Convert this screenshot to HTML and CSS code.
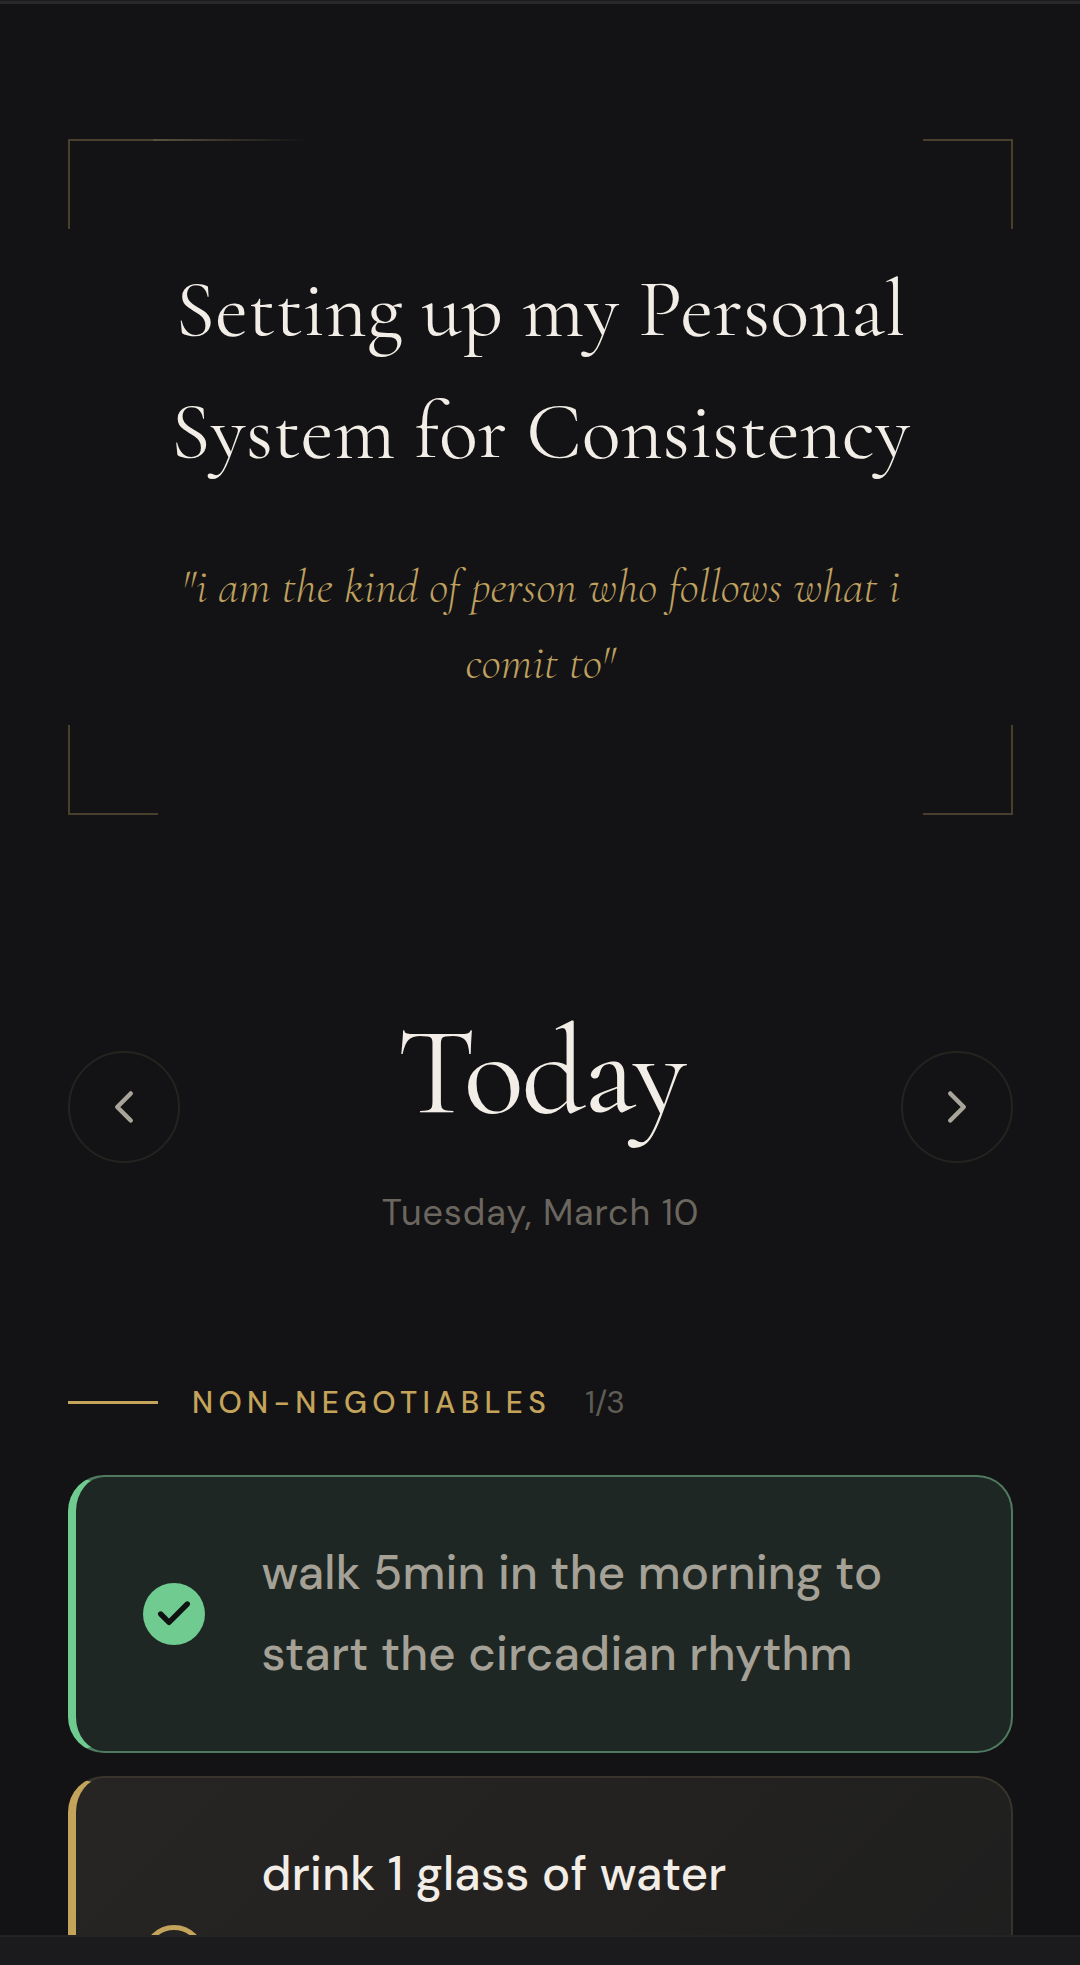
FILE: index.html
```html
<!DOCTYPE html>
<html lang="en">
<head>
<meta charset="utf-8">
<title>Personal System</title>
<link rel="stylesheet" href="styles.css">
</head>
<body>
<div class="app">
  <div class="top-bar"></div>
  <main class="content">
    <section class="hero">
      <span class="corner corner-tl"></span>
      <span class="corner corner-tr"></span>
      <span class="corner corner-bl"></span>
      <span class="corner corner-br"></span>
      <span class="shimmer"></span>
      <h1 class="hero-title">Setting up my Personal<br>System for Consistency</h1>
      <p class="hero-quote">"i am the kind of person who follows what i<br>comit to"</p>
    </section>
    <section class="day">
      <button class="nav-btn" aria-label="Previous day">
        <svg class="nav-icon" viewBox="0 0 24 24"><path d="m15 18-6-6 6-6"/></svg>
      </button>
      <div class="day-head">
        <h2 class="day-title">Today</h2>
        <p class="day-date">Tuesday, March 10</p>
      </div>
      <button class="nav-btn" aria-label="Next day">
        <svg class="nav-icon" viewBox="0 0 24 24"><path d="m9 18 6-6-6-6"/></svg>
      </button>
    </section>
    <section class="tasks">
      <header class="section-head">
        <span class="section-rule"></span>
        <span class="section-name">NON-NEGOTIABLES</span>
        <span class="section-count">1/3</span>
      </header>
      <article class="task task-done">
        <span class="check check-on">
          <svg class="check-icon" viewBox="0 0 24 24"><path d="M20 6 9 17l-5-5"/></svg>
        </span>
        <p class="task-text">walk 5min in the morning to<br>start the circadian rhythm</p>
      </article>
      <article class="task task-open">
        <span class="check check-off"></span>
        <p class="task-text">drink 1 glass of water</p>
      </article>
    </section>
  </main>
  <div class="bottom-bar"></div>
</div>
</body>
</html>
```
FILE: styles.css
```css
* { box-sizing: border-box; margin: 0; padding: 0; }
html, body { width: 1080px; height: 1965px; overflow: hidden; background: #131315; }
body { font-family: "DM Sans", "Inter", "Liberation Sans", sans-serif; }
.app { height: 1965px; display: flex; flex-direction: column; }
.top-bar { height: 4px; flex: none; background: #29292c; border-top: 1px solid #1c1c1e; }
.bottom-bar { height: 30px; flex: none; background: #1b1b1d; border-top: 2px solid #232325; }
.content { flex: 1; overflow: hidden; padding: 135px 67px 0 68px; }

.hero { position: relative; height: 676px; padding-top: 109px; text-align: center; }
.corner { position: absolute; width: 90px; height: 90px; border: 0 solid #483f2d; }
.corner-tl { top: 0; left: 0; border-top-width: 2px; border-left-width: 2px; }
.corner-tr { top: 0; right: 0; border-top-width: 2px; border-right-width: 2px; }
.corner-bl { bottom: 0; left: 0; border-bottom-width: 2px; border-left-width: 2px; }
.corner-br { bottom: 0; right: 0; border-bottom-width: 2px; border-right-width: 2px; }
.shimmer { position: absolute; top: 0; left: 85px; width: 155px; height: 2px; background: linear-gradient(90deg, #5a5340, #13131500); }
.hero-title { font-family: "Cormorant Garamond", "Liberation Serif", serif; font-weight: 400; font-size: 81px; line-height: 122px; color: #f2eee7; }
.hero-quote { margin-top: 58px; font-family: "Cormorant Garamond", "Liberation Serif", serif; font-style: italic; font-weight: 300; font-size: 47.25px; line-height: 75.6px; color: #bfa05f; }

.day { display: flex; align-items: center; justify-content: space-between; margin-top: 163.5px; }
.nav-btn { width: 112px; height: 112px; flex: none; display: flex; align-items: center; justify-content: center; background: none; border: 2px solid #24231f; border-radius: 50%; }
.nav-icon { width: 54px; height: 54px; fill: none; stroke: #a8a49a; stroke-width: 2; stroke-linecap: round; stroke-linejoin: round; }
.day-head { text-align: center; }
.day-title { font-family: "Cormorant Garamond", "Liberation Serif", serif; font-weight: 400; font-size: 126px; line-height: 187px; letter-spacing: -2.52px; color: #f2eee7; }
.day-date { margin-top: 24px; font-size: 36px; line-height: 46px; letter-spacing: 0.9px; color: #6b675f; }

.tasks { margin-top: 146px; }
.section-head { display: flex; align-items: center; gap: 34px; height: 41px; }
.section-rule { width: 90px; height: 3px; background: #c4a35a; }
.section-name { font-size: 30px; font-weight: 500; letter-spacing: 5.3px; color: #c4a35a; }
.section-count { font-size: 31.5px; color: #5f5c55; }

.task { display: flex; align-items: center; gap: 56.5px; margin-top: 23px; padding: 56px 67px; border: 2px solid; border-left-width: 8px; border-radius: 36px; }
.section-head + .task { margin-top: 52px; }
.task-done { background: #1e2724; border-color: #4f7a5f; border-left-color: #6fcb8f; }
.task-open { min-height: 360px; background: linear-gradient(135deg, #272523, #1e1e1e); border-color: #38342b; border-left-color: #c4a35a; }
.task-text { font-size: 47.25px; font-weight: 500; line-height: 81px; letter-spacing: 0.25px; }
.task-done .task-text { color: #a5a196; }
.task-open .task-text { align-self: flex-start; color: #f2eee7; }
.check { width: 62px; height: 62px; flex: none; border-radius: 50%; display: flex; align-items: center; justify-content: center; }
.check-on { background: #6fcb8f; }
.check-off { border: 5px solid #c4a35a; }
.check-icon { width: 40px; height: 40px; fill: none; stroke: #0f1211; stroke-width: 3.2; stroke-linecap: round; stroke-linejoin: round; }
```
